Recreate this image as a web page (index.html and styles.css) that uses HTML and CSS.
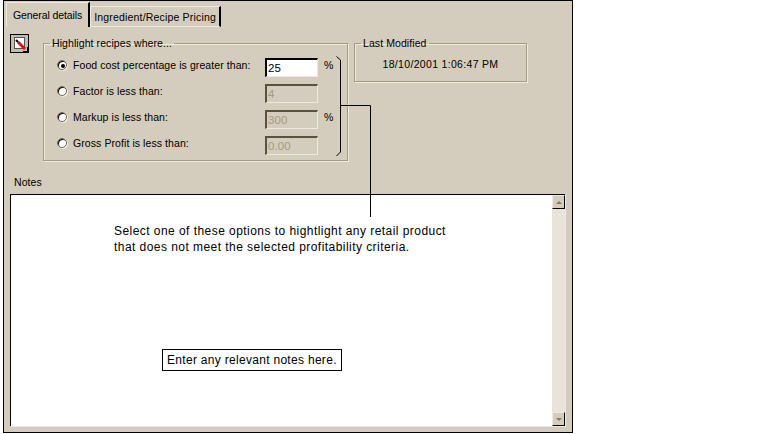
FILE: index.html
```html
<!DOCTYPE html>
<html lang="en">
<head>
  <meta charset="UTF-8">
  <title>General details</title>
  <link rel="stylesheet" href="styles.css">
</head>
<body>
  <div class="dialog">
    <div class="tabs">
      <div class="tab active">General details</div>
      <div class="tab second">Ingredient/Recipe Pricing</div>
    </div>
    <div class="page">
      <div class="top-row">
        <button class="icon-btn">
          <svg width="17" height="17" viewBox="0 0 17 17">
            <rect x="3.5" y="2.5" width="10" height="11" fill="#fff" stroke="#555"/>
            <path d="M7 7 L14 14" stroke="#e0101c" stroke-width="3"/>
            <path d="M5 5 L7 7" stroke="#000" stroke-width="2"/>
            <path d="M12 16.5 L16.5 16.5 L16.5 12" fill="none" stroke="#000"/>
          </svg>
        </button>
        <fieldset class="group highlight">
          <legend>Highlight recipes where...</legend>
          <div class="opt-row">
            <span class="radio checked"></span>
            <label>Food cost percentage is greater than:</label>
            <span class="field on">25</span>
            <span class="pct">%</span>
          </div>
          <div class="opt-row">
            <span class="radio"></span>
            <label>Factor is less than:</label>
            <span class="field">4</span>
            <span class="pct"></span>
          </div>
          <div class="opt-row">
            <span class="radio"></span>
            <label>Markup is less than:</label>
            <span class="field">300</span>
            <span class="pct">%</span>
          </div>
          <div class="opt-row">
            <span class="radio"></span>
            <label>Gross Profit is less than:</label>
            <span class="field">0.00</span>
            <span class="pct"></span>
          </div>
        </fieldset>
        <fieldset class="group modified">
          <legend>Last Modified</legend>
          <div class="stamp">18/10/2001 1:06:47 PM</div>
        </fieldset>
      </div>
      <div class="notes-label">Notes</div>
      <div class="notes">
        <div class="notes-body"></div>
        <div class="scrollbar">
          <span class="sb-btn"><i class="arrow up"></i></span>
          <span class="sb-btn"><i class="arrow down"></i></span>
        </div>
      </div>
    </div>
  </div>

  <!-- callouts sit on top of the dialog -->
  <svg class="leader" width="774" height="434" viewBox="0 0 774 434">
    <path d="M336.5 56.5 L340.5 60 L340.5 152 L336.5 156" fill="none" stroke="#000"/>
    <path d="M340 105.5 H370.5 V217" fill="none" stroke="#000"/>
  </svg>
  <p class="callout-text">Select one of these options to hightlight any retail product<br>that does not meet the selected profitability criteria.</p>
  <div class="callout-box">Enter any relevant notes here.</div>
</body>
</html>
```

FILE: styles.css
```css
html, body {
  margin: 0;
  padding: 0;
  height: 100%;
  background: #fff;
  overflow: hidden;
  font-family: "Liberation Sans", Arial, sans-serif;
  font-size: 10.5px;
  letter-spacing: 0.08px;
  color: #000;
}

.dialog {
  width: 570px;
  height: 433px;
  margin-left: 3px;
  box-sizing: border-box;
  background: #d4ccbc;
  border-left: 1px solid #000;
  border-right: 1px solid #000;
  border-bottom: 1px solid #000;
  display: flex;
  flex-direction: column;
}

/* Tabs */
.tabs {
  display: flex;
  height: 27px;
  box-sizing: border-box;
  padding-left: 2px;
  border-top: 1px solid #000;
  align-items: flex-end;
}

.tab {
  height: 21px;
  box-sizing: border-box;
  padding: 4px 3px 0 3px;
  border-top: 1px solid #eee9df;
  border-left: 1px solid #eee9df;
  border-right: 2px solid #000;
  border-bottom: 1px solid #eee9df;
  white-space: nowrap;
}

.tab.active {
  height: 25px;
  padding: 6px 6px 0 6px;
  border-bottom: none;
  letter-spacing: -0.1px;
}

.tab.second {
  letter-spacing: 0.18px;
}

/* Main page */
.page {
  flex: 1;
  padding: 0 7px 6px 6px;
  display: flex;
  flex-direction: column;
  min-height: 0;
}

.top-row {
  display: flex;
  align-items: flex-start;
  height: 127px;
}

.icon-btn {
  width: 19px;
  height: 19px;
  padding: 0;
  margin-top: 7px;
  margin-right: 14px;
  background: #c4bcac;
  border: 1px solid #000;
  box-sizing: border-box;
  display: block;
}

.group {
  margin: 0;
  padding: 0;
  box-sizing: border-box;
  border: 1px solid #a89a80;
  box-shadow: 1px 1px 0 #f0ebe2, inset 1px 1px 0 #f0ebe2;
}

.group legend {
  padding: 0 2px;
  margin-left: 6px;
  line-height: 12px;
}

.highlight {
  width: 305px;
  height: 124px;
  margin-top: 10px;
  margin-right: 6px;
  padding-top: 3px;
}

.modified {
  width: 173px;
  height: 45px;
  margin-top: 10px;
}

.stamp {
  text-align: center;
  padding-top: 9px;
  letter-spacing: 0.32px;
}

.opt-row {
  display: flex;
  align-items: center;
  height: 26px;
  padding-left: 13px;
}

.radio {
  width: 10px;
  height: 10px;
  margin-right: 6px;
  border-radius: 50%;
  background: #fff;
  border: 1px solid #6e6552;
  box-shadow: inset 1px 1px 0 #000, 1px 1px 0 #f0ebe2;
  box-sizing: border-box;
  position: relative;
}

.radio.checked::after {
  content: "";
  position: absolute;
  left: 2.5px;
  top: 2.5px;
  width: 4px;
  height: 4px;
  border-radius: 50%;
  background: #000;
}

.opt-row label {
  width: 192px;
  white-space: nowrap;
}

.field {
  width: 53px;
  height: 19px;
  margin-top: 5px;
  box-sizing: border-box;
  padding: 2px 0 0 1px;
  font-size: 11.5px;
  color: #a89a80;
  border-top: 2px solid #5a5140;
  border-left: 2px solid #5a5140;
  border-right: 1px solid #eee9df;
  border-bottom: 1px solid #eee9df;
}

.field.on {
  background: #fff;
  color: #000;
  border-top-color: #000;
  border-left-color: #000;
}

.pct {
  margin-left: 6px;
}

/* Notes */
.notes-label {
  margin-top: 22px;
  margin-left: 4px;
  height: 12px;
  line-height: 12px;
}

.notes {
  flex: 1;
  display: flex;
  margin-top: 6px;
  min-height: 0;
  border-top: 1px solid #000;
  border-left: 1px solid #000;
  box-shadow: 1px 1px 0 #eee9df;
}

.notes-body {
  flex: 1;
  background: #fff;
}

.scrollbar {
  width: 13px;
  background: #e8e4dc;
  display: flex;
  flex-direction: column;
  justify-content: space-between;
}

.sb-btn {
  height: 14px;
  box-sizing: border-box;
  background: #d4ccbc;
  border-top: 1px solid #eee9df;
  border-left: 1px solid #eee9df;
  border-right: 1px solid #000;
  border-bottom: 1px solid #000;
  display: flex;
  align-items: center;
  justify-content: center;
}

.arrow {
  width: 0;
  height: 0;
  border-left: 3px solid transparent;
  border-right: 3px solid transparent;
}

.arrow.up {
  border-bottom: 3px solid #8a7a5a;
}

.arrow.down {
  border-top: 3px solid #8a7a5a;
}

/* Callouts */
.leader {
  position: absolute;
  left: 0;
  top: 0;
  pointer-events: none;
}

.callout-text {
  position: absolute;
  left: 114px;
  top: 223px;
  width: 345px;
  margin: 0;
  font-size: 12px;
  letter-spacing: 0.45px;
  line-height: 16px;
}

.callout-box {
  position: absolute;
  left: 162px;
  top: 349px;
  width: 180px;
  height: 22px;
  box-sizing: border-box;
  background: #fff;
  border: 1px solid #000;
  font-size: 12px;
  letter-spacing: 0.3px;
  line-height: 20px;
  padding-left: 4px;
  white-space: nowrap;
}
```
